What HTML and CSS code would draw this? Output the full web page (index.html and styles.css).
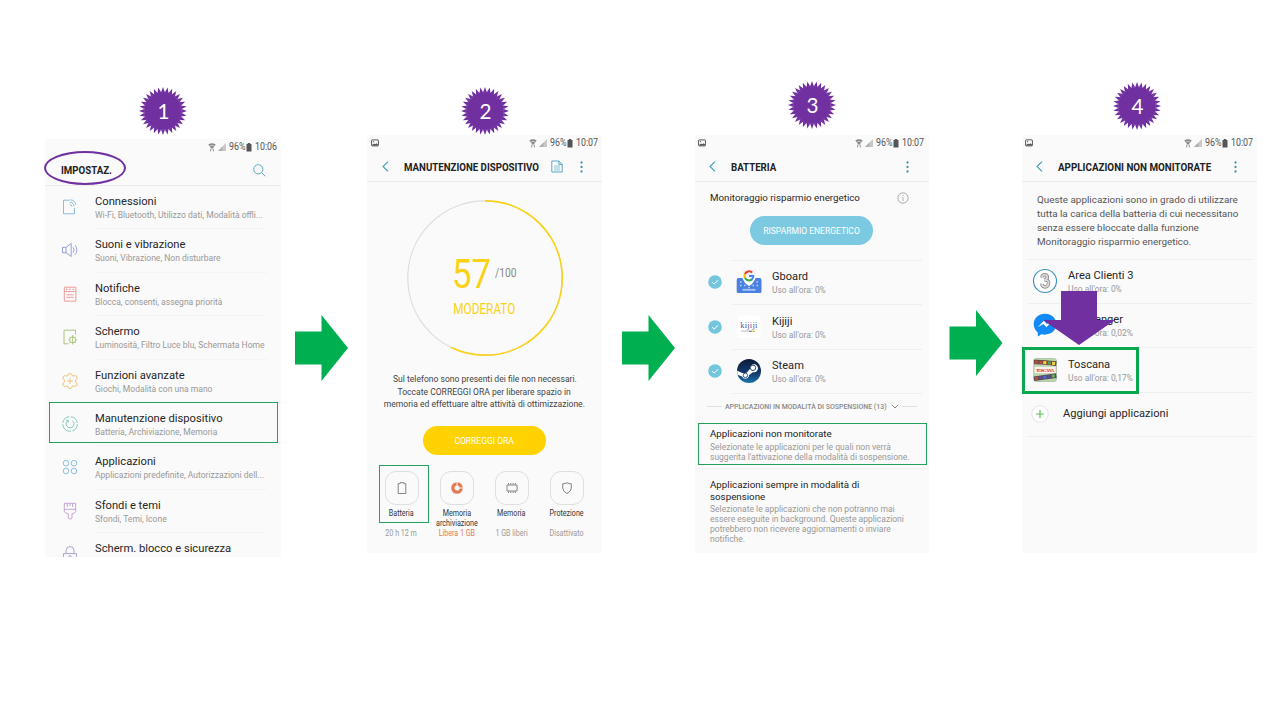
FILE: index.html
```html
<!DOCTYPE html>
<html lang="it">
<head>
<meta charset="utf-8">
<title>Manutenzione dispositivo</title>
<link rel="stylesheet" href="styles.css">
</head>
<body>
<svg class="defs" width="0" height="0">
  <defs>
    <path id="p1" d="M-1.95-18.5L0-24L1.95-18.5z"/>
    <g id="p2"><use href="#p1"/><use href="#p1" transform="rotate(11.25)"/></g>
    <g id="p4"><use href="#p2"/><use href="#p2" transform="rotate(22.5)"/></g>
    <g id="p8"><use href="#p4"/><use href="#p4" transform="rotate(45)"/></g>
    <g id="p16"><use href="#p8"/><use href="#p8" transform="rotate(90)"/></g>
    <symbol id="burst" viewBox="-24 -24 48 48"><g fill="#7030a0"><circle r="18.9"/><use href="#p16"/><use href="#p16" transform="rotate(180)"/></g></symbol>
    <symbol id="next" viewBox="0 0 53 66"><path d="M0 16.5H26.5V0L53 33L26.5 66V49.5H0z" fill="#00b050"/></symbol>
    <symbol id="wifi" viewBox="0 0 8 9"><path d="M.3 1.6Q4-1 7.7 1.6L5 5H3z" fill="#888"/><path d="M1.8 3Q4 1.6 6.2 3" stroke="#fafafa" stroke-width=".6" fill="none"/><path d="M3.2 5.2L2.4 8.4M4.8 5.2L5.6 8.4" stroke="#888" stroke-width=".9" fill="none"/></symbol>
    <symbol id="signal" viewBox="0 0 8 8"><path d="M8 0V8H0z" fill="#c8c8c8"/><path d="M4.5 3.5V8H0z" fill="#b0b0b0"/></symbol>
    <symbol id="batt" viewBox="0 0 6 9"><path d="M1.8 0h2.4v1H5.5V8.5H.5V1H1.8z" fill="#555"/></symbol>
    <symbol id="photo" viewBox="0 0 8 8"><rect x=".6" y=".9" width="6.8" height="6" rx=".5" fill="#fff" stroke="#555" stroke-width="1"/><path d="M1 6L3 4.4L4.2 5.3L5.4 4.2L7 5.6V6.5H1z" fill="#555"/><circle cx="2.6" cy="2.7" r=".6" fill="#555"/></symbol>
    <symbol id="back" viewBox="0 0 7 11"><path d="M6 .7L1 5.5L6 10.3" fill="none" stroke="#3f9fba" stroke-width="1.1"/></symbol>
    <symbol id="more" viewBox="0 0 3 12"><g fill="#3f94b0"><circle cx="1.5" cy="1.5" r="1.15"/><circle cx="1.5" cy="6" r="1.15"/><circle cx="1.5" cy="10.5" r="1.15"/></g></symbol>
    <symbol id="check" viewBox="0 0 14 14"><circle cx="7" cy="7" r="6.8" fill="#74c6df"/><path d="M4 7l2.1 2.1L10.1 5.3" fill="none" stroke="#fff" stroke-width="1"/></symbol>
  </defs>
</svg>
<main class="slide">

<section class="step step1">
  <div class="badge"><svg><use href="#burst"/></svg><span>1</span></div>
  <div class="phone tall">
    <div class="status"><svg class="wifi"><use href="#wifi"/></svg><svg class="signal"><use href="#signal"/></svg><span class="pct">96%</span><svg class="batt"><use href="#batt"/></svg><span class="time">10:06</span></div>
    <div class="bar"><h2>IMPOSTAZ.</h2><svg class="search" viewBox="0 0 13 13"><circle cx="5.3" cy="5.3" r="4.6"/><path d="M8.7 8.7l3.6 3.6"/></svg></div>
    <ul class="settings">
      <li><svg viewBox="0 0 18 18" stroke="#7fb6d8"><path d="M8.5 2.2H2.5V15.8H13.5V9.8"/><path d="M8.8 6.5a2 2 0 0 1 2 2M8.8 4.1a4.3 4.3 0 0 1 4.3 4.3M9.3 1.8a6.1 6.1 0 0 1 5.6 5"/></svg><div><b>Connessioni</b><small>Wi-Fi, Bluetooth, Utilizzo dati, Modalità offli...</small></div></li>
      <li><svg viewBox="0 0 18 18" stroke="#8a97d6"><path d="M1.5 6.3H5L10.2 2.5V15.5L5 11.7H1.5zM5 6.3V11.7"/><path d="M12.2 6.3q1.8 2.7 0 5.4M14.2 4.3q3.4 4.7 0 9.4"/></svg><div><b>Suoni e vibrazione</b><small>Suoni, Vibrazione, Non disturbare</small></div></li>
      <li><svg viewBox="0 0 18 18" stroke="#eb928c"><path d="M3.3 2.2H14.9V16.2H3.3zM3.3 6.6H14.9M5.5 9.8H12.7M5.5 12.3H12.7"/><path d="M5 4.5h1.3M8.3 4.5h1.3M11.6 4.5h1.3" stroke-width="1.5"/></svg><div><b>Notifiche</b><small>Blocca, consenti, assegna priorità</small></div></li>
      <li><svg viewBox="0 0 18 18" stroke="#a0c070"><path d="M7.5 15.8H3V2.2H14.5V6.5"/><circle cx="11.7" cy="11.8" r="3"/><path d="M11.7 7v9.5M7.5 11.8H8.7M14.7 11.8H16M8.5 8.7l1 1M8.5 15l1-1M15 8.7l-1 1M15 15l-1-1"/></svg><div><b>Schermo</b><small>Luminosità, Filtro Luce blu, Schermata Home</small></div></li>
      <li><svg viewBox="0 0 18 18" stroke="#edbd68"><path d="M7 3.5Q6.8 1.5 9 1.5T11 3.5Q12 4.3 13.2 3.8Q15.2 3 16 5T14.8 7.6Q14.2 9 14.8 10.4Q16.8 11.2 16 13T13.2 14.2Q12 13.7 11 14.5Q11.2 16.5 9 16.5T7 14.5Q6 13.7 4.8 14.2Q2.8 15 2 13T3.2 10.4Q3.8 9 3.2 7.6Q1.2 6.8 2 5T4.8 3.8Q6 4.3 7 3.5zM9 6.2V11.8M6.2 9H11.8"/></svg><div><b>Funzioni avanzate</b><small>Giochi, Modalità con una mano</small></div></li>
      <li><svg viewBox="0 0 18 18" stroke="#7bc2b4"><circle cx="9" cy="9" r="7.3" stroke-dasharray="9 1.5 12 1.5 9.5 1.5 9.5 1.4"/><path d="M11.2 5.6A3.9 3.9 0 1 1 7 5.6M5.2 5.3H7.3V7.4"/></svg><div><b>Manutenzione dispositivo</b><small>Batteria, Archiviazione, Memoria</small></div></li>
      <li><svg viewBox="0 0 18 18" stroke="#80b8dc"><circle cx="5" cy="5.2" r="2.8"/><circle cx="13" cy="5.2" r="2.8"/><circle cx="5" cy="13" r="2.8"/><circle cx="13" cy="13" r="2.8"/></svg><div><b>Applicazioni</b><small>Applicazioni predefinite, Autorizzazioni dell...</small></div></li>
      <li><svg viewBox="0 0 18 18" stroke="#c39bd0"><path d="M3.3 1.3H14.7V9.5Q14.7 10.8 11 11.8V16.2Q9 18 7.3 16.2V11.8Q3.3 10.8 3.3 9.5zM3.3 7.3H14.7M6.3 1.3V5M9 1.3V4M11.5 1.3V5"/></svg><div><b>Sfondi e temi</b><small>Sfondi, Temi, Icone</small></div></li>
      <li><svg viewBox="0 0 18 18" stroke="#a59ace"><path d="M2.5 8.6H15.5V17H2.5zM5 8.6V5.5a4 4 0 0 1 8 0V8.6"/><circle cx="9" cy="12" r="1.3"/></svg><div><b>Scherm. blocco e sicurezza</b></div></li>
    </ul>
  </div>
  <div class="ellipse"></div>
  <div class="box box1"></div>
</section>

<svg class="arrow a1"><use href="#next"/></svg>

<section class="step step2">
  <div class="badge"><svg><use href="#burst"/></svg><span>2</span></div>
  <div class="phone">
    <div class="status"><svg class="photo"><use href="#photo"/></svg><svg class="wifi"><use href="#wifi"/></svg><svg class="signal"><use href="#signal"/></svg><span class="pct">96%</span><svg class="batt"><use href="#batt"/></svg><span class="time">10:07</span></div>
    <div class="bar"><svg class="back"><use href="#back"/></svg><h2>MANUTENZIONE DISPOSITIVO</h2><svg class="doc" viewBox="0 0 12 13"><path d="M.8 1H7.8L11.2 4.4V12H.8zM7.8 1V4.4H11.2"/><path d="M3 6H9M3 8H9M3 10H9" stroke-width=".6"/></svg><svg class="more"><use href="#more"/></svg></div>
    <div class="ring">
      <svg viewBox="0 0 158 158"><circle cx="79" cy="79" r="77.2" stroke="#dcdcdc" stroke-width="1.2"/><circle cx="79" cy="79" r="77.2" stroke="#fbd218" stroke-width="1.7" pathLength="100" stroke-dasharray="57.3 42.7" transform="rotate(-90 79 79)"/></svg>
      <div class="score"><span class="num">57</span><span class="den">/100</span></div>
      <span class="level">MODERATO</span>
    </div>
    <p class="hint"><span>Sul telefono sono presenti dei file non necessari.</span><span>Toccate CORREGGI ORA per liberare spazio in</span><span>memoria ed effettuare altre attività di ottimizzazione.</span></p>
    <div class="button yellow"><span>CORREGGI ORA</span></div>
    <div class="tiles">
      <div class="tile"><i><svg viewBox="0 0 14 14"><path d="M3.2 2.7H5V1.7H9V2.7H10.8V12.5H3.2z"/></svg></i><span class="name">Batteria</span><span class="val">20 h 12 m</span></div>
      <div class="tile"><i><svg viewBox="0 0 14 14"><circle cx="7" cy="7" r="4.2" stroke="#e67a55" stroke-width="3.3"/><path d="M7 5.6V.5M8.4 7H13.5" stroke="#fafafa" stroke-width=".9"/></svg></i><span class="name">Memoria<br>archiviazione</span><span class="val hot">Libera 1 GB</span></div>
      <div class="tile"><i><svg viewBox="0 0 14 14"><path d="M2 4H12V10H2z"/><path d="M3.5 3.6V2M5.8 3.6V2M8.1 3.6V2M10.4 3.6V2M3.5 10.4V12M5.8 10.4V12M8.1 10.4V12M10.4 10.4V12"/></svg></i><span class="name">Memoria</span><span class="val">1 GB liberi</span></div>
      <div class="tile"><i><svg viewBox="0 0 14 14"><path d="M2.7 2.8Q5 2.7 7 1.8Q9 2.7 11.3 2.8V7Q11.3 10.3 7 12.6Q2.7 10.3 2.7 7z"/></svg></i><span class="name">Protezione</span><span class="val">Disattivato</span></div>
    </div>
  </div>
  <div class="box box2"></div>
</section>

<svg class="arrow a2"><use href="#next"/></svg>

<section class="step step3">
  <div class="badge"><svg><use href="#burst"/></svg><span>3</span></div>
  <div class="phone">
    <div class="status"><svg class="photo"><use href="#photo"/></svg><svg class="wifi"><use href="#wifi"/></svg><svg class="signal"><use href="#signal"/></svg><span class="pct">96%</span><svg class="batt"><use href="#batt"/></svg><span class="time">10:07</span></div>
    <div class="bar"><svg class="back"><use href="#back"/></svg><h2>BATTERIA</h2><svg class="more"><use href="#more"/></svg></div>
    <div class="monitor"><span>Monitoraggio risparmio energetico</span><svg viewBox="0 0 12 12"><circle cx="6" cy="6" r="5.2"/><path d="M6 5V9M6 3V4"/></svg></div>
    <div class="button blue"><span>RISPARMIO ENERGETICO</span></div>
    <ul class="apps">
      <li><svg class="check"><use href="#check"/></svg><svg class="app" viewBox="0 0 26 26"><path d="M7 .5H20V13H7z" fill="#f1f1f1"/><path d="M1.5 9H7L13 16.5L19 9H24.5L25.5 11V22.5Q25.5 24 24 24H2Q.7 24 .7 22.5V11z" fill="#4a80e0"/><path d="M6.5 9Q8 14 13 17Q18 14 19.5 9z" fill="#fff"/><path d="M4 13h1.6M4 16.5h1.6M8 16.5h1.6M12.2 18.5h1.6M16.5 16.5h1.6M20.5 13h1.6M20.5 16.5h1.6" stroke="#bcd2fa" stroke-width="1.5"/><path d="M6.5 20.8H19.5" stroke="#a9c6fb" stroke-width="1.8"/><g fill="none" stroke-width="2"><path d="M16.2 3.6A4.6 4.6 0 0 0 8.9 5" stroke="#e5402f"/><path d="M8.9 5A4.6 4.6 0 0 0 9 9" stroke="#fbbc05"/><path d="M9 9A4.6 4.6 0 0 0 15.9 10.4" stroke="#34a853"/><path d="M15.9 10.4Q17.4 9 17.2 7H13" stroke="#4285f4"/></g></svg><div><b>Gboard</b><small>Uso all'ora: 0%</small></div></li>
      <li><svg class="check"><use href="#check"/></svg><svg class="app" viewBox="0 0 26 26"><rect x="2" y="1.5" width="22.5" height="22.5" rx="2" fill="#fff"/><text x="4.3" y="13.5" font-family="Liberation Serif,serif" font-size="8.5" fill="#5655a3" textLength="17">kijiji</text><path d="M5 17H13" stroke="#aaa" stroke-width=".8"/><path d="M13 17.3h3" stroke="#888" stroke-width="1.3"/><path d="M16.3 17.3h2.5" stroke="#d7bc42" stroke-width="1.5"/></svg><div><b>Kijiji</b><small>Uso all'ora: 0%</small></div></li>
      <li><svg class="check"><use href="#check"/></svg><svg class="app" viewBox="0 0 26 26"><defs><linearGradient id="steam" x2="0" y2="1"><stop stop-color="#0e1b38"/><stop offset=".6" stop-color="#123b70"/><stop offset="1" stop-color="#1c74aa"/></linearGradient></defs><circle cx="13" cy="13" r="12" fill="url(#steam)"/><path d="M1 12.8L7 15.2L10.8 14.7L14 10.7A4 4 0 1 1 17 14.2L13 17A3.6 3.6 0 0 1 6.1 18.5L1.6 16.8z" fill="#fff"/><circle cx="17" cy="9.8" r="2.7" fill="#fff" stroke="#15345f" stroke-width=".9"/><circle cx="9.4" cy="17.4" r="2.2" fill="#fff" stroke="#15345f" stroke-width=".8"/></svg><div><b>Steam</b><small>Uso all'ora: 0%</small></div></li>
    </ul>
    <div class="divider"><hr><span class="w"><span>APPLICAZIONI IN MODALITÀ DI SOSPENSIONE (13)</span></span><svg viewBox="0 0 8 5"><path d="M.8 .8L4 4L7.2 .8"/></svg><hr></div>
    <div class="option o1"><b>Applicazioni non monitorate</b><small>Selezionate le applicazioni per le quali non verrà<br>suggerita l'attivazione della modalità di sospensione.</small></div>
    <div class="option o2"><b>Applicazioni sempre in modalità di<br>sospensione</b><small>Selezionate le applicazioni che non potranno mai<br>essere eseguite in background. Queste applicazioni<br>potrebbero non ricevere aggiornamenti o inviare<br>notifiche.</small></div>
  </div>
  <div class="box box3"></div>
</section>

<svg class="arrow a3"><use href="#next"/></svg>

<section class="step step4">
  <div class="badge"><svg><use href="#burst"/></svg><span>4</span></div>
  <div class="phone">
    <div class="status"><svg class="photo"><use href="#photo"/></svg><svg class="wifi"><use href="#wifi"/></svg><svg class="signal"><use href="#signal"/></svg><span class="pct">96%</span><svg class="batt"><use href="#batt"/></svg><span class="time">10:07</span></div>
    <div class="bar"><svg class="back"><use href="#back"/></svg><h2>APPLICAZIONI NON MONITORATE</h2><svg class="more"><use href="#more"/></svg></div>
    <p class="intro">Queste applicazioni sono in grado di utilizzare<br>tutta la carica della batteria di cui necessitano<br>senza essere bloccate dalla funzione<br>Monitoraggio risparmio energetico.</p>
    <ul class="apps wide">
      <li><svg class="app" viewBox="0 0 26 26"><circle cx="13" cy="13" r="11.5" fill="#fff" stroke="#3b8fbd" stroke-width="1.1"/><g fill="none"><path d="M10 9.4Q10 6.6 13 6.7Q16 7 15.2 9.9Q14.6 11.7 12 11.9Q17 11.6 16.6 15.3Q16 19.2 12.8 18.9Q9.6 18.3 10 15.8" stroke="#888" stroke-width="3.4"/><path d="M10 9.4Q10 6.6 13 6.7Q16 7 15.2 9.9Q14.6 11.7 12 11.9Q17 11.6 16.6 15.3Q16 19.2 12.8 18.9Q9.6 18.3 10 15.8" stroke="#dadada" stroke-width="1.8"/></g></svg><div><b>Area Clienti 3</b><small>Uso all'ora: 0%</small></div></li>
      <li><svg class="app" viewBox="0 0 26 26"><path d="M13 1.7C6.5 1.7 1.7 6.3 1.7 12.1C1.7 15.5 3.3 18.5 5.8 20.4V24.5L9.5 22.3C17 24 24.3 19.5 24.3 12.1C24.3 6.3 19.5 1.7 13 1.7z" fill="#1289f8"/><path d="M5.8 15.2L11.8 8.8L14.9 11.9L20.4 8.8L14.4 15.2L11.3 12.1z" fill="#fff"/></svg><div><b>Messenger</b><small>Uso all'ora: 0,02%</small></div></li>
      <li><svg class="app" viewBox="0 0 26 26"><rect x="1.7" y="1.5" width="22.8" height="23" rx="2.5" fill="#bcd8b0" stroke="#8da585" stroke-width=".5"/><path d="M2 5Q10 4.6 24.3 6.6" stroke="#5d4a42" stroke-width="4.6" fill="none"/><path d="M2.8 5L24 6.5" stroke="#d04437" stroke-width="3" stroke-dasharray="3.2 1.2"/><path d="M11.3 5.6l3 .2M20 6.2l3 .2" stroke="#ecd648" stroke-width="3"/><path d="M15.7 5.9l3 .2" stroke="#48a759" stroke-width="3"/><rect x="2.6" y="9.8" width="21" height="6.4" fill="#fbf1ee"/><text x="3.9" y="14.7" font-family="Liberation Serif,serif" font-size="4.8" font-weight="bold" fill="#e32b24" textLength="18.4">TOSCANA</text><path d="M2 21.8L24.3 18.6" stroke="#55504e" stroke-width="4.6"/><path d="M3 21.6L24 18.6" stroke="#6b3fb0" stroke-width="3" stroke-dasharray="3 1.2"/><path d="M3 21.6l3-.4" stroke="#cc4436" stroke-width="3"/><path d="M11.3 20.4l3-.4" stroke="#3a72ce" stroke-width="3"/><path d="M19.8 19.2l3-.4" stroke="#5ab74b" stroke-width="3"/></svg><div><b>Toscana</b><small>Uso all'ora: 0,17%</small></div></li>
      <li class="add"><svg viewBox="0 0 18 18"><circle cx="9" cy="9" r="8.3" fill="#fff" stroke="#e4e4e4"/><path d="M9 5V13M5 9H13" stroke="#62bd58" stroke-width="1.2"/></svg><b>Aggiungi applicazioni</b></li>
      <li class="end"></li>
    </ul>
  </div>
  <svg class="down" viewBox="0 0 72 54"><path d="M18 0H54V29H72L36 54L0 29H18z" fill="#7030a0"/></svg>
  <div class="box box4"></div>
</section>

</main>
</body>
</html>
```
FILE: styles.css
```css
* { box-sizing: border-box; margin: 0; padding: 0; }
body { width: 1280px; height: 720px; overflow: hidden; background: #fff; font-family: Roboto, "Liberation Sans", sans-serif; color: #262626; }
svg { display: block; flex: none; }
.defs { position: absolute; }
ul { list-style: none; }
b { font-weight: 400; display: block; white-space: nowrap; }
small { display: block; white-space: nowrap; color: #999; }
.slide { display: flex; align-items: flex-start; height: 720px; }
.step { position: relative; flex: none; }
.step1 { margin: 87px 0 0 45px; width: 236px; }
.step2 { margin: 87px 0 0 19px; width: 235px; }
.step3 { margin: 81px 0 0 20px; width: 234px; }
.step4 { margin: 82px 0 0 19px; width: 235px; }
.arrow { width: 53px; height: 66px; }
.a1 { margin: 315px 0 0 14px; }
.a2 { margin: 315px 0 0 20px; }
.a3 { margin: 310px 0 0 20px; width: 54px; }

.badge { display: grid; width: 48px; height: 48px; margin-left: 94px; }
.badge > * { grid-area: 1 / 1; }
.badge svg { width: 48px; height: 48px; }
.badge span { place-self: center; font: 22px/1 Lato, sans-serif; color: #fff; transform: scaleX(.94); }
.step3 .badge { margin-left: 93px; }
.step4 .badge { margin-left: 91px; }
.phone { height: 417.5px; background: #fafafa; overflow: hidden; }
.step1 .phone { margin-top: 4px; }
.step3 .phone { margin-top: 6px; }
.step4 .phone { margin-top: 5px; }

.status { display: flex; align-items: center; height: 15px; padding: 1px 5px 0 4px; color: #555; font-size: 10.3px; line-height: 14px; }
.step3 .status { padding: 1px 6px 0 3px; }
.step4 .status { padding-left: 3px; }
.photo { width: 8px; height: 8px; }
.wifi { width: 8px; height: 9px; margin-left: auto; }
.signal { width: 8px; height: 8px; margin-left: 2px; }
.batt { width: 6px; height: 9px; margin: 0 3px 0 1px; }
.pct, .time { display: inline-block; width: 16px; margin-left: 3px; transform: scaleX(.86); transform-origin: left; white-space: nowrap; }
.time { width: 21px; margin-left: 0; }
.bar { display: flex; align-items: center; height: 32px; border-bottom: 1px solid #ececec; padding: 2px 16px 0 15px; }
.bar h2 { font-size: 11.6px; line-height: 14px; font-weight: 700; color: #222; white-space: nowrap; transform: scaleX(.835); transform-origin: left; width: 0; }
.step3 .bar, .step4 .bar { padding-left: 14px; }
.step4 .bar h2 { transform: scaleX(.848); }
.tall .bar { padding: 1px 15px 0 16px; }
.search { width: 13px; height: 13px; margin-left: auto; fill: none; stroke: #5aa9c8; }
.back { width: 7px; height: 11px; margin-right: 15px; }
.more { width: 3px; height: 12px; margin-left: auto; }
.doc { width: 12px; height: 13px; margin-left: 147px; fill: none; stroke: #4aa3be; stroke-width: .9; }
.step2 .more { margin-right: 3px; }
.step3 .more, .step4 .more { margin-right: 4px; }

.settings li { display: flex; height: 43.4px; padding: 9px 0 0 16px; }
.settings svg { width: 18px; height: 18px; margin-top: 3px; fill: none; stroke-width: .9; }
.settings div { margin-left: 16px; width: 172px; height: 34.4px; border-bottom: 1px solid #f4f4f4; }
.settings b { font-size: 11.2px; line-height: 14px; }
.settings small { font-size: 8.55px; line-height: 12px; }

.box { position: absolute; border: 1px solid #23a15c; }
.box1 { left: 4px; top: 315px; width: 229px; height: 41px; }
.box2 { left: 12px; top: 378px; width: 50px; height: 58px; }
.box3 { left: 3px; top: 342px; width: 229px; height: 42px; }
.box4 { left: 0; top: 265px; width: 117px; height: 47px; border: 3px solid #08a84f; }
.ellipse { position: absolute; left: -1px; top: 64px; width: 82px; height: 34px; border: 2px solid #7030a0; border-radius: 50%; }
.down { position: absolute; left: 21px; top: 209px; width: 72px; height: 54px; }

.ring { display: grid; width: 158px; height: 158px; margin: 17px auto 0 38.5px; }
.ring > * { grid-area: 1 / 1; }
.ring svg { fill: none; }
.score { display: flex; padding: 51px 0 0 46.5px; color: #fbd218; }
.num { font-size: 40px; line-height: 50px; transform: scaleX(.87); transform-origin: left; width: 42.5px; }
.den { font-size: 12px; line-height: 14px; color: #888; margin-top: 16px; transform: scaleX(.85); transform-origin: left; }
.level { margin-top: 102px; justify-self: center; align-self: start; color: #fbd218; font-size: 13.8px; line-height: 17px; transform: scaleX(.855); }
.hint { display: flex; flex-direction: column; align-items: center; margin-top: 16px; color: #444; font-size: 9.3px; line-height: 12.6px; }
.hint span { white-space: nowrap; transform: scaleX(.92); }
.button { display: flex; align-items: center; justify-content: center; width: 123px; height: 29px; border-radius: 14.5px; color: #fff; font-size: 9.8px; white-space: nowrap; margin-left: 56px; }
.button span { transform: scaleX(.87); }
.yellow { background: #ffd200; margin-top: 15.2px; }
.blue { background: #7ccae1; margin-left: 55px; margin-top: 5px; }
.tiles { display: flex; margin: 16px 0 0 7px; }
.tile { flex: none; width: 55px; height: 75px; display: flex; flex-direction: column; align-items: center; font-size: 8.2px; line-height: 9.5px; text-align: center; color: #333; white-space: nowrap; }
.tile i { display: grid; place-items: center; width: 34px; height: 34px; border: 1px solid #dfdfdf; border-radius: 11px; }
.tile svg { width: 14px; height: 14px; fill: none; stroke: #777; stroke-width: .9; }
.name { margin-top: 4.5px; height: 20px; transform: scaleX(.87); }
.val { color: #999; transform: scaleX(.87); }
.hot { color: #e67a55; }

.monitor { display: flex; align-items: center; height: 29px; padding: 2px 20px 0 15px; justify-content: space-between; font-size: 9.77px; }
.monitor svg { width: 12px; height: 12px; fill: none; stroke: #999; stroke-width: .8; }
.apps { padding-top: 15px; }
.apps li { display: flex; height: 44.4px; align-items: center; padding-left: 13px; background: linear-gradient(#efefef, #efefef) 37px 0 / 190px 1px no-repeat; }
.check { width: 14px; height: 14px; }
.app { width: 26px; height: 26px; margin-left: 14px; }
.apps div { margin-left: 10px; padding-top: 2.5px; }
.apps b { font-size: 11.1px; line-height: 14px; }
.apps small { font-size: 8.45px; line-height: 12px; }
.divider { display: flex; align-items: center; justify-content: space-between; height: 26px; padding: 0 12px; background: linear-gradient(#efefef, #efefef) 37px 0 / 190px 1px no-repeat; }
.divider hr { width: 15px; border: 0; border-top: 1px solid #e0e0e0; }
.divider .w { width: 162px; }
.divider .w span { display: block; font-size: 8px; font-weight: 500; color: #888; white-space: nowrap; transform: scaleX(.87); transform-origin: left; width: 0; }
.divider svg { width: 8px; height: 5px; fill: none; stroke: #888; }
.option { padding-left: 15px; }
.option b { font-size: 9.77px; line-height: 11.5px; color: #222; }
.option small { font-size: 8.53px; line-height: 10px; margin-top: 2px; }
.o1 { padding-top: 9px; height: 50px; border-bottom: 1px solid #efefef; }
.o2 { padding-top: 10px; }

.intro { padding: 10.5px 0 0 15px; font-size: 9.9px; line-height: 14.2px; color: #555; white-space: nowrap; height: 76.6px; }
.wide { padding-top: 0; }
.wide li { padding-left: 10px; background-position: 6px 0; background-size: 224px 1px; }
.wide .app { margin-left: 0; }
.wide .add { padding: 0 0 0 9px; }
.wide .add svg { width: 18px; height: 18px; }
.wide .add b { margin-left: 14px; padding-top: 1px; }
```
